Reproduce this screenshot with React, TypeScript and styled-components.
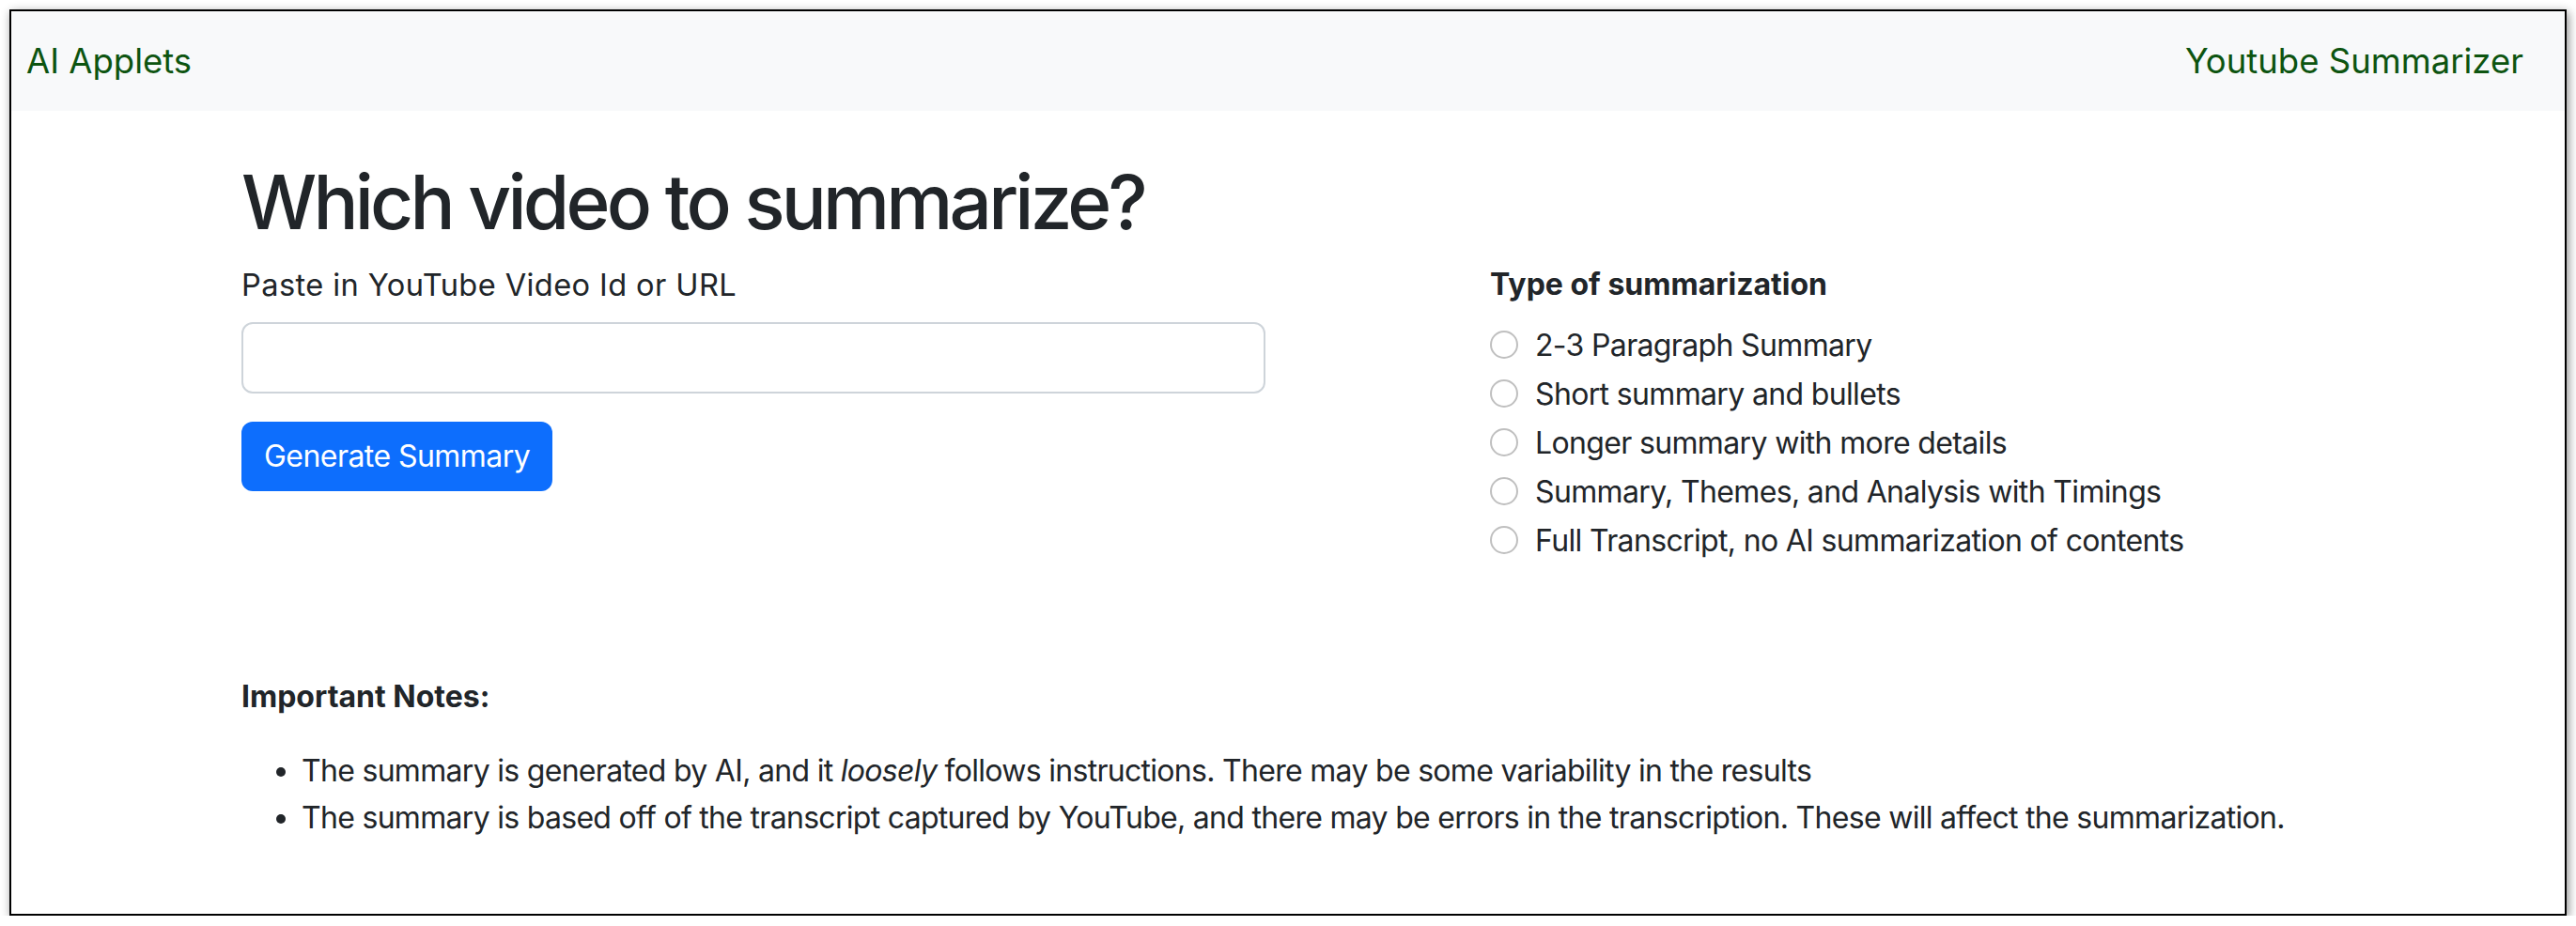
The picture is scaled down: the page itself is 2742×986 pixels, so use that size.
import React from "react";
import styled, { createGlobalStyle } from "styled-components";

const Global = createGlobalStyle`
  html, body { margin: 0; padding: 0; background: #ffffff; }
  body { font-family: Inter, "Noto Sans", "Liberation Sans", sans-serif; color: #212529; }
  * { box-sizing: border-box; }
`;

const Frame = styled.div`
  margin: 10px 0 0 10px;
  width: 2722px;
  height: 965px;
  border: 2px solid #000;
  background: #fff;
  box-shadow: 2px 3px 10px rgba(0, 0, 0, 0.45);
  display: flex;
  flex-direction: column;
  overflow: hidden;
`;

const Navbar = styled.nav`
  height: 106px;
  background: #f8f9fa;
  display: flex;
  align-items: center;
  justify-content: space-between;
  padding: 0 44px 0 16px;
`;

const Brand = styled.a`
  font-size: 36.5px;
  color: #0d5410;
  text-decoration: none;
`;

const Container = styled.main`
  padding: 49px 0 0 245px;
`;

const Title = styled.h1`
  margin: 0 0 16px;
  font-size: 80px;
  line-height: 96px;
  font-weight: 500;
  letter-spacing: -3.8px;
`;

const Row = styled.div`
  display: grid;
  grid-template-columns: 1090px 1fr;
  column-gap: 239px;
  margin-bottom: 115px;
`;

const Column = styled.div`
  display: flex;
  flex-direction: column;
  align-items: flex-start;
`;

const Label = styled.label<{ $bold?: boolean }>`
  display: block;
  font-size: ${(p) => (p.$bold ? "32px" : "32.6px")};
  line-height: 48px;
  margin-bottom: 16px;
  font-weight: ${(p) => (p.$bold ? 700 : 400)};
  letter-spacing: ${(p) => (p.$bold ? "0" : "0.4px")};
`;

const TextInput = styled.input`
  width: 100%;
  height: 76px;
  border: 2px solid #ced4da;
  border-radius: 12px;
  padding: 0 24px;
  font-size: 32px;
  font-family: inherit;
  outline: none;
`;

const Button = styled.button`
  margin-top: 30px;
  height: 74px;
  padding: 0 24px;
  border: none;
  border-radius: 12px;
  background: #0d6efd;
  color: #fff;
  font-family: inherit;
  font-size: 32px;
  line-height: 48px;
  letter-spacing: -0.55px;
`;

const RadioRow = styled.label`
  display: flex;
  align-items: center;
  height: 48px;
  margin-bottom: 4px;
  font-size: 32px;
  letter-spacing: -0.65px;
`;

const RadioCircle = styled.span`
  width: 30px;
  height: 30px;
  border-radius: 50%;
  border: 2px solid rgba(0, 0, 0, 0.25);
  margin-right: 18px;
  flex: none;
`;

const NotesTitle = styled.p`
  margin: 0;
  font-size: 32px;
  line-height: 48px;
  font-weight: 700;
`;

const NotesList = styled.ul`
  margin: 30px 0 0;
  padding-left: 64px;
  font-size: 32px;
  line-height: 50px;
  letter-spacing: -0.7px;
`;

const options = [
  "2-3 Paragraph Summary",
  "Short summary and bullets",
  "Longer summary with more details",
  "Summary, Themes, and Analysis with Timings",
  "Full Transcript, no AI summarization of contents",
];

export default function App() {
  return (
    <>
      <Global />
      <Frame>
        <Navbar>
          <Brand href="#">AI Applets</Brand>
          <Brand href="#">Youtube Summarizer</Brand>
        </Navbar>
        <Container>
          <Title>Which video to summarize?</Title>
          <Row>
            <Column>
              <Label>Paste in YouTube Video Id or URL</Label>
              <TextInput type="text" />
              <Button>Generate Summary</Button>
            </Column>
            <Column>
              <Label $bold>Type of summarization</Label>
              {options.map((o) => (
                <RadioRow key={o}>
                  <RadioCircle />
                  {o}
                </RadioRow>
              ))}
            </Column>
          </Row>
          <NotesTitle>Important Notes:</NotesTitle>
          <NotesList>
            <li>
              The summary is generated by AI, and it <em>loosely</em> follows
              instructions. There may be some variability in the results
            </li>
            <li>
              The summary is based off of the transcript captured by YouTube,
              and there may be errors in the transcription. These will affect
              the summarization.
            </li>
          </NotesList>
        </Container>
      </Frame>
    </>
  );
}
